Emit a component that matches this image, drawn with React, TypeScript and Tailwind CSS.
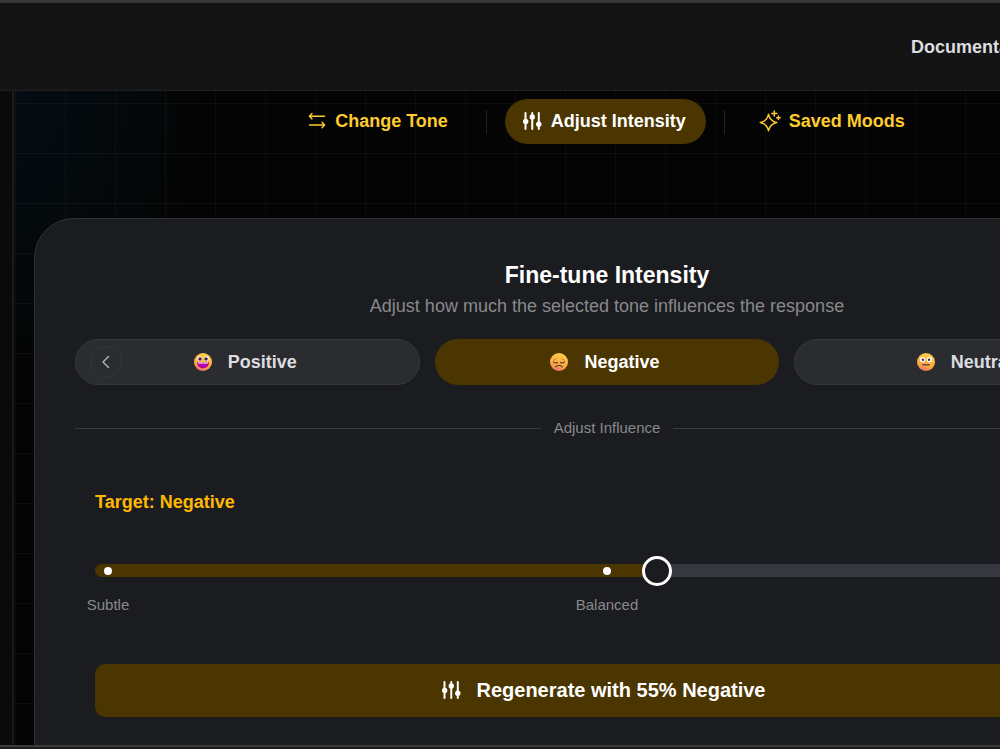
import { useState } from "react";
import type { ReactNode } from "react";

type Mood = "positive" | "negative" | "neutral";

function SlidersIcon() {
  return (
    <svg className="size-5 shrink-0" viewBox="0 0 20 20" fill="currentColor" aria-hidden="true">
      <rect x="1.500" y="1" width="2" height="18" rx="1" />
      <rect x="8.250" y="1" width="2" height="18" rx="1" />
      <rect x="14.800" y="1" width="2" height="18" rx="1" />
      <circle cx="2.700" cy="10.500" r="2.700" />
      <circle cx="9.250" cy="6" r="2.700" />
      <circle cx="15.800" cy="13.300" r="2.700" />
    </svg>
  );
}

function SwapIcon() {
  return (
    <svg className="size-5 shrink-0" viewBox="0 0 20 20" fill="none" stroke="currentColor" strokeWidth={1.4} strokeLinecap="round" strokeLinejoin="round" aria-hidden="true">
      <path d="M17.500 5.300H2.500M5 2.600 2.400 5.300 5 8" />
      <path d="M2.500 14h15M15 11.300l2.600 2.700-2.600 2.700" />
    </svg>
  );
}

function SparklesIcon() {
  return (
    <svg className="-ml-0.5 size-[22px] shrink-0" viewBox="0 0 22 22" fill="none" stroke="currentColor" strokeWidth={1.5} strokeLinecap="round" strokeLinejoin="round" aria-hidden="true">
      <path d="M9.500 4.300C10.500 8.900 13.100 11.500 17.700 12.500C13.100 13.500 10.500 16.100 9.500 20.700C8.500 16.100 5.900 13.500 1.300 12.500C5.900 11.500 8.500 8.900 9.500 4.300Z" />
      <path d="M15.300 1v5M12.800 3.500h5M19.400 6v3.600M17.600 7.800h3.600" />
    </svg>
  );
}

function MoodFace({ mood }: { mood: Mood }) {
  return (
    <svg className="size-[18px] shrink-0" viewBox="0 0 18 18" aria-hidden="true">
      <defs>
        <linearGradient id={`face-${mood}`} x1="0.65" y1="0" x2="0.35" y2="1">
          <stop offset="0" stopColor="#ffd047" />
          <stop offset="0.7" stopColor="#fca63e" />
          <stop offset="1" stopColor="#f36c74" />
        </linearGradient>
      </defs>
      <circle cx="9" cy="9" r="9" fill={`url(#face-${mood})`} />
      {mood === "positive" && (
        <>
          <circle cx="5.8" cy="5.8" r="2.5" fill="#fff" />
          <circle cx="12.2" cy="5.8" r="2.5" fill="#fff" />
          <circle cx="6" cy="6" r="1.8" fill="#43273f" />
          <circle cx="12" cy="6" r="1.8" fill="#43273f" />
          <path d="M3 9.200h12c0 3.700-2.400 6-6 6s-6-2.300-6-6Z" fill="#b4009e" />
          <path d="M3.800 9.200h10.400v.8c0 .5-.3.8-.8.8H4.600c-.5 0-.8-.3-.8-.8Z" fill="#e0b8e4" />
        </>
      )}
      {mood === "negative" && (
        <g fill="none" stroke="#5a3a3c" strokeWidth="1.2" strokeLinecap="round">
          <path d="M3.500 8.800q1.900 1.900 3.900.6M14.500 8.800q-1.900 1.900-3.900.6" />
          <path d="M5.800 13.800q3.200-2.800 6.400 0" />
          <path d="M3.600 7.200q1.800-.3 2.700-1.500M14.400 7.200q-1.800-.3-2.700-1.500" stroke="#b8682c" strokeWidth="0.8" />
        </g>
      )}
      {mood === "neutral" && (
        <>
          <circle cx="5.6" cy="6.6" r="2.6" fill="#fff" />
          <circle cx="12.4" cy="6.6" r="2.6" fill="#fff" />
          <circle cx="5.9" cy="6.8" r="1.2" fill="#43273f" />
          <circle cx="12.1" cy="6.8" r="1.2" fill="#43273f" />
          <path d="M5.800 11.800h6.400" stroke="#6b4547" strokeWidth="1.5" strokeLinecap="round" />
        </>
      )}
    </svg>
  );
}

function NavTab({ icon, label, active = false }: { icon: ReactNode; label: string; active?: boolean }) {
  return (
    <button
      type="button"
      className={`flex h-[45px] items-center gap-2 rounded-full pb-px pl-[18px] pr-5 text-lg font-bold ${
        active ? "bg-[#4b3500] text-white" : "text-[#ffcb2f]"
      }`}
    >
      {icon}
      {label}
    </button>
  );
}

const moods: { id: Mood; label: string }[] = [
  { id: "positive", label: "Positive" },
  { id: "negative", label: "Negative" },
  { id: "neutral", label: "Neutral" },
];

const steps = ["Subtle", "Balanced", "Strong"];

export default function App() {
  const [mood, setMood] = useState<Mood>("negative");
  const [level, setLevel] = useState(55);
  const moodLabel = moods.find((m) => m.id === mood)?.label;

  return (
    <div className="flex h-screen flex-col overflow-hidden bg-[#0a0a0a] font-['Liberation_Sans',Arial,sans-serif] text-white">
      <header className="flex h-[91px] shrink-0 items-center border-b border-t-3 border-b-[#202022] border-t-[#37373b] bg-[#141414]">
        <nav className="flex w-full min-w-[1215px] justify-end pr-[173px]">
          <a href="#documentation" className="text-lg font-bold text-[#dcdde0]">
            Documentation
          </a>
        </nav>
      </header>

      <div className="flex min-h-0 flex-1 overflow-hidden">
        <main className="ml-3 min-w-[1188px] flex-1 border-l-2 border-[#1b1b1e] bg-[#040404] bg-[linear-gradient(to_right,rgba(255,255,255,0.035)_1px,transparent_1px),linear-gradient(to_bottom,rgba(255,255,255,0.035)_1px,transparent_1px),radial-gradient(190px_280px_at_0_0,#060b14_0%,#04090c_50%,#040404_100%)] bg-size-[50px_50px,50px_50px,auto] bg-position-[1px_12px,1px_12px,0_0] px-5 pt-2">
          <div className="flex items-center justify-center gap-[18px]">
            <NavTab icon={<SwapIcon />} label="Change Tone" />
            <span className="h-6 w-px bg-[#222224]" />
            <NavTab icon={<SlidersIcon />} label="Adjust Intensity" active />
            <span className="h-6 w-px bg-[#222224]" />
            <NavTab icon={<SparklesIcon />} label="Saved Moods" />
          </div>

          <section className="mt-[74px] rounded-[40px] border border-[#303135] bg-[#1b1c20] px-10 pb-16 pt-10">
            <h2 className="text-center text-[23px] leading-8 font-bold">Fine-tune Intensity</h2>
            <p className="text-center text-lg leading-[30px] text-[#88898c]">
              Adjust how much the selected tone influences the response
            </p>

            <div className="relative mt-[18px] grid grid-cols-3 gap-[15px]">
              {moods.map((m) => (
                <button
                  key={m.id}
                  type="button"
                  onClick={() => setMood(m.id)}
                  className={`flex h-[46px] items-center justify-center gap-4 rounded-full pr-1 text-lg font-bold ${
                    m.id === mood
                      ? "bg-[#4b3500] text-white"
                      : "border border-[#36373b] bg-[#2b2c2f] text-[#dcdde0]"
                  }`}
                >
                  <MoodFace mood={m.id} />
                  {m.label}
                </button>
              ))}
              <button
                type="button"
                aria-label="Previous tone"
                className="absolute left-[15px] top-[7px] flex size-8 items-center justify-center rounded-full border border-[#343538] text-[#b5b6b9]"
              >
                <svg className="size-4" viewBox="0 0 16 16" fill="none" stroke="currentColor" strokeWidth={1.4} strokeLinecap="round" strokeLinejoin="round">
                  <path d="M10.500 2.500 5 8l5.500 5.500" />
                </svg>
              </button>
            </div>

            <div className="mt-[31px] flex items-center gap-[13px] text-[15px] leading-6 text-[#88898c]">
              <span className="h-px flex-1 bg-[#3a3b3f]" />
              Adjust Influence
              <span className="h-px flex-1 bg-[#3a3b3f]" />
            </div>

            <div className="px-5 pt-12">
              <label htmlFor="intensity" className="block text-lg leading-7 font-bold text-[#ffb900]">
                Target: {moodLabel}
              </label>

              <div className="relative mt-12 flex">
                <input
                  id="intensity"
                  type="range"
                  min={0}
                  max={100}
                  value={level}
                  onChange={(e) => setLevel(Number(e.target.value))}
                  className="h-[13px] w-full cursor-pointer appearance-none rounded-full [&::-webkit-slider-thumb]:size-[30px] [&::-webkit-slider-thumb]:appearance-none [&::-webkit-slider-thumb]:rounded-full [&::-webkit-slider-thumb]:border-3 [&::-webkit-slider-thumb]:border-solid [&::-webkit-slider-thumb]:border-white [&::-webkit-slider-thumb]:bg-[#1b1c20]"
                  style={{ background: `linear-gradient(to right, #4b3500 ${level}%, #37383f ${level}%)` }}
                />
                <div className="pointer-events-none absolute inset-0 flex items-center justify-between px-[9px]">
                  {steps.map((step) => (
                    <span key={step} className="size-2 rounded-full bg-white" />
                  ))}
                </div>
              </div>

              <div className="-mx-[27px] mt-4 flex justify-between text-[15px] leading-6 text-[#88898c]">
                {steps.map((step) => (
                  <span key={step} className="w-20 text-center">
                    {step}
                  </span>
                ))}
              </div>

              <button
                type="button"
                className="mt-[47px] flex h-[53px] w-full items-center justify-center gap-3.5 rounded-[10px] bg-[#4b3500] pb-px pr-1.5 text-xl font-bold text-white"
              >
                <SlidersIcon />
                Regenerate with {level}% {moodLabel}
              </button>
            </div>
          </section>
        </main>
      </div>

      <footer className="h-1 shrink-0 border-t-2 border-[#3a3a3c] bg-[#1c1b1d]" />
    </div>
  );
}
